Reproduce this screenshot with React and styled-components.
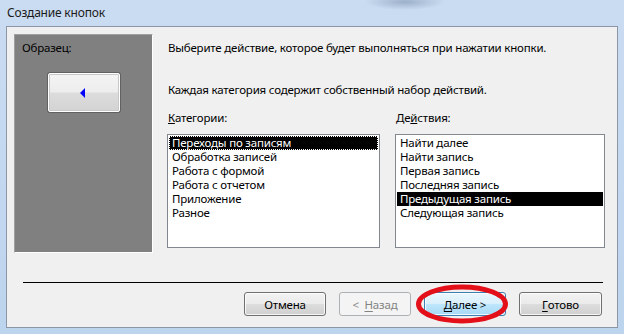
import styled, { createGlobalStyle } from "styled-components";

const GlobalStyle = createGlobalStyle`
    * { box-sizing: border-box; }
    html, body { margin: 0; padding: 0; }
    body {
        width: 624px;
        height: 334px;
        overflow: hidden;
        font-family: 'Noto Sans', 'Open Sans', sans-serif;
        font-size: 11.5px;
        letter-spacing: -0.2px;
        color: #000000;
    }
`;

const categorias = ["Переходы по записям", "Обработка записей", "Работа с формой", "Работа с отчетом", "Приложение", "Разное"];
const acoes = ["Найти далее", "Найти запись", "Первая запись", "Последняя запись", "Предыдущая запись", "Следующая запись"];

export default function App(){
    return (
        <>
            <GlobalStyle />
            <Janela>
                <Titulo>Создание кнопок</Titulo>
                <Cliente>
                    <Conteudo>
                        <Amostra>
                            <span>Образец:</span>
                            <BotaoAmostra>
                                <svg width="6" height="10" viewBox="0 0 6 10">
                                    <path d="M5 0 L5 10 L0 5 Z" fill="#0000ff" />
                                </svg>
                            </BotaoAmostra>
                        </Amostra>
                        <Coluna>
                            <Texto espaco={26}>Выберите действие, которое будет выполняться при нажатии кнопки.</Texto>
                            <Texto espaco={12}>Каждая категория содержит собственный набор действий.</Texto>
                            <Listas>
                                <Grupo largura={213}>
                                    <Rotulo><u>К</u>атегории:</Rotulo>
                                    <Lista>
                                        {categorias.map((c, i) => <Item key={c} selecionado={i === 0} foco={i === 0}>{c}</Item>)}
                                    </Lista>
                                </Grupo>
                                <Grupo largura={210}>
                                    <Rotulo>Де<u>й</u>ствия:</Rotulo>
                                    <Lista>
                                        {acoes.map((a, i) => <Item key={a} selecionado={i === 4}>{a}</Item>)}
                                    </Lista>
                                </Grupo>
                            </Listas>
                        </Coluna>
                    </Conteudo>
                    <Separador />
                    <Rodape>
                        <Botao largura={82}>Отмена</Botao>
                        <Botao largura={72} desativado>&lt;&nbsp; <u>Н</u>азад</Botao>
                        <Destaque>
                            <Botao largura={82} padrao><u>Д</u>алее &gt;</Botao>
                            <Elipse width="94" height="42" viewBox="0 0 94 42">
                                <ellipse cx="47" cy="21" rx="43.5" ry="17" fill="none" stroke="#e3101a" strokeWidth="5" />
                            </Elipse>
                        </Destaque>
                        <Botao largura={83}><u>Г</u>отово</Botao>
                    </Rodape>
                </Cliente>
            </Janela>
        </>
    );
}

const Janela = styled.div`
    width: 624px;
    height: 334px;
    display: flex;
    flex-direction: column;
    padding: 0 6px 6px 6px;
    background-image:
        radial-gradient(ellipse 40px 8px at 405px 2px, rgba(120,140,170,0.55), rgba(120,140,170,0) 100%),
        linear-gradient(to bottom, #cadcf1 0%, #bdd4ee 100%);
`;

const Titulo = styled.div`
    height: 26px;
    display: flex;
    align-items: center;
    padding: 0 0 1px 1px;
    font-size: 12px;
    color: #1a1a1a;
`;

const Cliente = styled.div`
    flex: 1;
    display: flex;
    flex-direction: column;
    background-color: #f0f0f0;
    border: 1px solid #8b97a6;
    padding: 7px 0 0 7px;
`;

const Conteudo = styled.div`
    display: flex;
    gap: 14px;
    height: 220px;
`;

const Amostra = styled.div`
    width: 139px;
    height: 219px;
    background-color: #808080;
    border: 1px solid;
    border-color: #a0a0a0 #ffffff #ffffff #a0a0a0;
    display: flex;
    flex-direction: column;
    align-items: center;
    padding-top: 5px;
    span{
        align-self: flex-start;
        padding-left: 7px;
        line-height: 16px;
    }
`;

const BotaoAmostra = styled.div`
    margin-top: 17px;
    width: 72px;
    height: 39px;
    border: 1px solid #ffffff;
    border-radius: 2px;
    box-shadow: 0 0 0 1px rgba(40,40,40,0.35), inset 0 0 0 1px #c8c8c8;
    background: linear-gradient(to bottom, #f4f4f4 0%, #ededed 48%, #dcdcdc 52%, #d3d3d3 100%);
    display: flex;
    align-items: center;
    justify-content: center;
    svg{
        margin-right: 1px;
    }
`;

const Coluna = styled.div`
    display: flex;
    flex-direction: column;
    padding-top: 6px;
`;

const Texto = styled.p`
    margin: 0 0 ${props => props.espaco}px 0;
    line-height: 16px;
    padding-left: 1px;
`;

const Listas = styled.div`
    display: flex;
    gap: 15px;
`;

const Grupo = styled.div`
    width: ${props => props.largura}px;
    display: flex;
    flex-direction: column;
`;

const Rotulo = styled.div`
    line-height: 16px;
    margin-bottom: 8px;
    padding-left: 1px;
`;

const Lista = styled.div`
    height: 114px;
    background-color: #ffffff;
    border: 1px solid #828790;
    padding: 1px 1px;
    display: flex;
    flex-direction: column;
`;

const Item = styled.div`
    height: 14px;
    line-height: 14px;
    padding-left: 3px;
    white-space: nowrap;
    background-color: ${props => props.selecionado ? '#000000' : 'transparent'};
    color: ${props => props.selecionado ? '#ffffff' : '#000000'};
    outline: ${props => props.foco ? '1px dotted #ffffff' : 'none'};
    outline-offset: -1px;
`;

const Separador = styled.div`
    margin: 28px 14px 0 9px;
    height: 1px;
    background-color: #000000;
`;

const Rodape = styled.div`
    display: flex;
    justify-content: flex-end;
    align-items: center;
    gap: 13px;
    margin-top: 9px;
    padding-right: 15px;
`;

const Destaque = styled.div`
    position: relative;
    display: flex;
`;

const Elipse = styled.svg`
    position: absolute;
    left: -9px;
    top: -9px;
    pointer-events: none;
`;

const Botao = styled.div`
    width: ${props => props.largura}px;
    height: 24px;
    display: flex;
    align-items: center;
    justify-content: center;
    white-space: pre;
    border-radius: 3px;
    border: 1px solid ${props => props.padrao ? '#3c7fb1' : props.desativado ? '#adb2b5' : '#707070'};
    color: ${props => props.desativado ? '#838383' : '#000000'};
    box-shadow: inset 0 0 0 1px ${props => props.desativado ? 'transparent' : 'rgba(255,255,255,0.8)'};
    background: ${props => props.padrao
        ? 'linear-gradient(to bottom, #eaf6fd 0%, #d9f0fc 48%, #bee6fd 52%, #a7d9f5 100%)'
        : props.desativado
            ? '#f4f4f4'
            : 'linear-gradient(to bottom, #f2f2f2 0%, #ebebeb 48%, #dddddd 52%, #cfcfcf 100%)'};
    u{
        text-decoration-thickness: 1px;
        text-underline-offset: 2px;
    }
`;
